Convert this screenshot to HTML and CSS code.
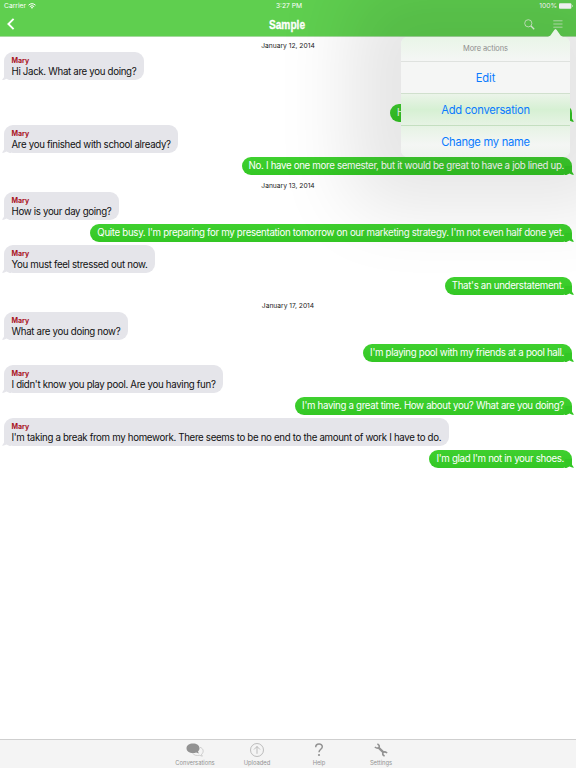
FILE: index.html
```
<!DOCTYPE html>
<html>
	<head>
		<meta charset="UTF-8">
		<title>Sample</title>
		<link rel="stylesheet" href="styles.css">
	</head>
	<body>
		<div class="app">
			<div class="header">
				<div class="status">
					<div class="carrier">
						<span>Carrier</span>
						<svg width="8" height="6" viewBox="0 0 8 6"><path d="M.5 2.2Q4-.9 7.5 2.2M1.8 3.6Q4 1.7 6.2 3.6" fill="none" stroke="#fff" stroke-width="1"/><path d="M2.8 4.5Q4 3.6 5.2 4.5L4 5.8z" fill="#fff"/></svg>
					</div>
					<div class="time">3:27 PM</div>
					<div class="power">
						<span>100%</span>
						<svg width="14" height="6" viewBox="0 0 14 6"><rect x="0" y=".3" width="12.4" height="5.4" rx="1" fill="#fff"/><path d="M13 2v2q.8-.3.8-1t-.8-1" fill="#fff"/></svg>
					</div>
				</div>
				<div class="nav">
					<svg class="back" width="8" height="12" viewBox="0 0 8 12"><path d="M6.6.8L1.4 6l5.2 5.2" fill="none" stroke="#fff" stroke-width="1.9"/></svg>
					<h1>Sample</h1>
					<div class="tools">
						<svg width="11" height="11" viewBox="0 0 11 11" fill="none" stroke="#e4f5e0"><circle cx="4.3" cy="4.3" r="3.6" stroke-width=".8"/><path d="M7 7l3.2 3.2" stroke-width="1.3"/></svg>
						<svg width="10" height="8" viewBox="0 0 10 8"><path d="M.3 .8h9.2M.3 4h9.2M.3 7.2h9.2" stroke="#d3efcd" stroke-width=".8"/></svg>
					</div>
				</div>
			</div>
			<div class="chat">
				<p class="date">January 12, 2014</p>
				<div class="msg in first"><b>Mary</b><span>Hi Jack. What are you doing?</span></div>
				<div class="msg out covered"><span>H</span></div>
				<div class="msg in"><b>Mary</b><span>Are you finished with school already?</span></div>
				<div class="msg out"><span>No. I have one more semester, but it would be great to have a job lined up.</span></div>
				<p class="date">January 13, 2014</p>
				<div class="msg in"><b>Mary</b><span>How is your day going?</span></div>
				<div class="msg out"><span>Quite busy. I'm preparing for my presentation tomorrow on our marketing strategy. I'm not even half done yet.</span></div>
				<div class="msg in"><b>Mary</b><span>You must feel stressed out now.</span></div>
				<div class="msg out"><span>That's an understatement.</span></div>
				<p class="date">January 17, 2014</p>
				<div class="msg in"><b>Mary</b><span>What are you doing now?</span></div>
				<div class="msg out"><span>I'm playing pool with my friends at a pool hall.</span></div>
				<div class="msg in"><b>Mary</b><span>I didn't know you play pool. Are you having fun?</span></div>
				<div class="msg out"><span>I'm having a great time. How about you? What are you doing?</span></div>
				<div class="msg in"><b>Mary</b><span>I'm taking a break from my homework. There seems to be no end to the amount of work I have to do.</span></div>
				<div class="msg out"><span>I'm glad I'm not in your shoes.</span></div>
			</div>
			<div class="tabbar">
				<div class="tab">
					<svg width="18" height="14" viewBox="0 0 18 14"><path d="M14 4.300c4 1.200 3.900 5.500 1.500 7l.8 1.900-2.700-.9c-3 .5-6 .1-7.200-2.500" fill="none" stroke="#b5b5b5" stroke-width=".6"/><path d="M7 .5c3.800 0 6.500 2 6.500 4.700 0 1.300-.6 2.400-1.500 3.200l.9 2-2.800-1C9.200 9.800 8.100 10 7 10 3.200 10 .5 7.900.5 5.200S3.200.5 7 .5z" fill="#929292"/></svg>
					<span>Conversations</span>
				</div>
				<div class="tab">
					<svg width="14" height="14" viewBox="0 0 14 14" fill="none" stroke="#a5a5a5" stroke-width=".7"><circle cx="7" cy="7" r="6.500"/><path d="M7 10.800V3.500M4 6.500l3-3 3 3"/></svg>
					<span>Uploaded</span>
				</div>
				<div class="tab">
					<svg width="10" height="14" viewBox="0 0 10 14"><path d="M1.700 4.200C1.700-.1 8.300-.1 8.300 3.700 8.300 6.200 5 6.300 5 9.300" fill="none" stroke="#929292" stroke-width="1.500"/><circle cx="5" cy="12" r="1.100" fill="#929292"/></svg>
					<span>Help</span>
				</div>
				<div class="tab">
					<svg width="14" height="14" viewBox="0 0 14 14" fill="none" stroke="#929292"><path d="M4.600 4.600l4.800 4.800" stroke-width="2.200"/><path d="M3.400.8Q6 2.300 5.100 4.300 3.600 6.100.8 4M10.600 13.200Q8 11.700 8.900 9.700 10.400 7.900 13.200 10" stroke-width="1.500"/></svg>
					<span>Settings</span>
				</div>
			</div>
			<div class="popover">
				<div class="arrow"></div>
				<div class="item caption">More actions</div>
				<div class="item edit">Edit</div>
				<div class="item tint">Add conversation</div>
				<div class="item fade">Change my name</div>
			</div>
		</div>
	</body>
</html>
```
FILE: styles.css
```
*{
	margin:0;
	padding:0;
	box-sizing:border-box;
}
body{
	font-family:Inter,"Liberation Sans",sans-serif;
	background:#fff;
}
.app{
	position:relative;
	width:576px;
	height:768px;
	display:flex;
	flex-direction:column;
	overflow:hidden;
}
.header{
	height:37px;
	background:#5fcf4f;
	border-bottom:1px solid #a5d99e;
	color:#fff;
}
.status{
	height:12px;
	display:grid;
	grid-template-columns:1fr 1fr 1fr;
	align-items:center;
	padding:0 3px 0 4px;
	font-size:6.7px;
	line-height:12px;
}
.carrier,.power{
	display:flex;
	align-items:center;
	gap:2px;
}
.power{
	justify-content:flex-end;
}
.time{
	text-align:center;
	padding-left:1px;
}
.nav{
	height:24px;
	display:grid;
	grid-template-columns:1fr 1fr 1fr;
	align-items:center;
	padding:0 13px 0 7px;
}
.nav h1{
	font:bold 13px/23px "Liberation Sans",sans-serif;
	text-align:center;
	padding-left:6px;
	transform:scaleX(.78);
	-webkit-text-stroke:.3px #fff;
}
.tools{
	display:flex;
	justify-content:flex-end;
	align-items:center;
	gap:18px;
}
.chat{
	flex:1;
	display:flex;
	flex-direction:column;
	padding-top:3px;
}
.date{
	height:12px;
	line-height:12px;
	font-size:6.7px;
	text-align:center;
	color:#222;
}
.msg{
	position:relative;
	margin-bottom:4px;
	font-size:9.7px;
	letter-spacing:-.318px;
	line-height:13px;
	white-space:nowrap;
}
.msg span{
	display:block;
}
.in{
	align-self:flex-start;
	height:28.300px;
	margin-left:4px;
	padding:4px 7.500px;
	background:#e5e5ea;
	border-radius:9px;
	color:#111;
}
.in b{
	display:block;
	font-size:7px;
	letter-spacing:0;
	line-height:9px;
	color:#a9141e;
}
.out{
	align-self:flex-end;
	height:18px;
	margin-right:4px;
	margin-bottom:2.700px;
	padding:0 8px 0 7px;
	line-height:18px;
	background:linear-gradient(#3fd02f,#33c724);
	border-radius:9px;
	color:#fff;
}
.out + .date{
	margin-top:2px;
}
.first{
	margin-bottom:23.700px;
}
.covered{
	width:182px;
}
/* speech bubble tails */
.in:after,.out:after{
	content:"";
	position:absolute;
	bottom:0;
	width:9px;
	height:9px;
	background:#e5e5ea;
}
.in:after{
	left:-2px;
	clip-path:polygon(22% 0,22% 65%,0 98%,20% 97%,50% 84%,85% 100%,100% 100%,100% 0);
}
.out:after{
	right:-2px;
	background:#33c724;
	clip-path:polygon(78% 0,78% 65%,100% 98%,80% 97%,50% 84%,15% 100%,0 100%,0 0);
}
.tabbar{
	height:29px;
	display:flex;
	justify-content:center;
	background:#f4f4f4;
	border-top:1px solid #cfcfcf;
}
.tab{
	width:62px;
	padding-top:3px;
	display:flex;
	flex-direction:column;
	align-items:center;
	gap:2px;
	font-size:5.800px;
	line-height:8px;
	color:#929292;
}
.popover{
	position:absolute;
	left:401px;
	top:37px;
	width:169px;
	border-radius:7px;
	background:#f5f6f5;
	box-shadow:0 0 75px 52px rgba(0,0,0,.1);
}
.arrow{
	position:absolute;
	left:147px;
	top:-8px;
	width:15px;
	height:8px;
	background:#e9f5e7;
	clip-path:polygon(43% 8%,50% 0,57% 8%,84% 80%,100% 100%,0 100%,16% 80%);
}
.item{
	height:32px;
	line-height:32px;
	font-size:11.200px;
	letter-spacing:-.27px;
	text-align:center;
	color:#0a7aff;
	border-top:1px solid #dfe2df;
}
.caption{
	height:24px;
	line-height:24px;
	font-size:7.500px;
	letter-spacing:-.1px;
	color:#8e8e8e;
	border-top:0;
	border-radius:7px 7px 0 0;
	background:linear-gradient(#e9f5e7,#f5f6f5);
}
.edit{
	letter-spacing:-.1px;
}
.tint{
	background:linear-gradient(#ebf4e9,#d6f0d3 50%,#e6f3e4);
	border-color:#d0e0cd;
}
.fade{
	border-radius:0 0 7px 7px;
	background:linear-gradient(#e6f3e4,#f4f6f4 60%,#eff4ee);
	border-color:#c4dfc0;
}
```
